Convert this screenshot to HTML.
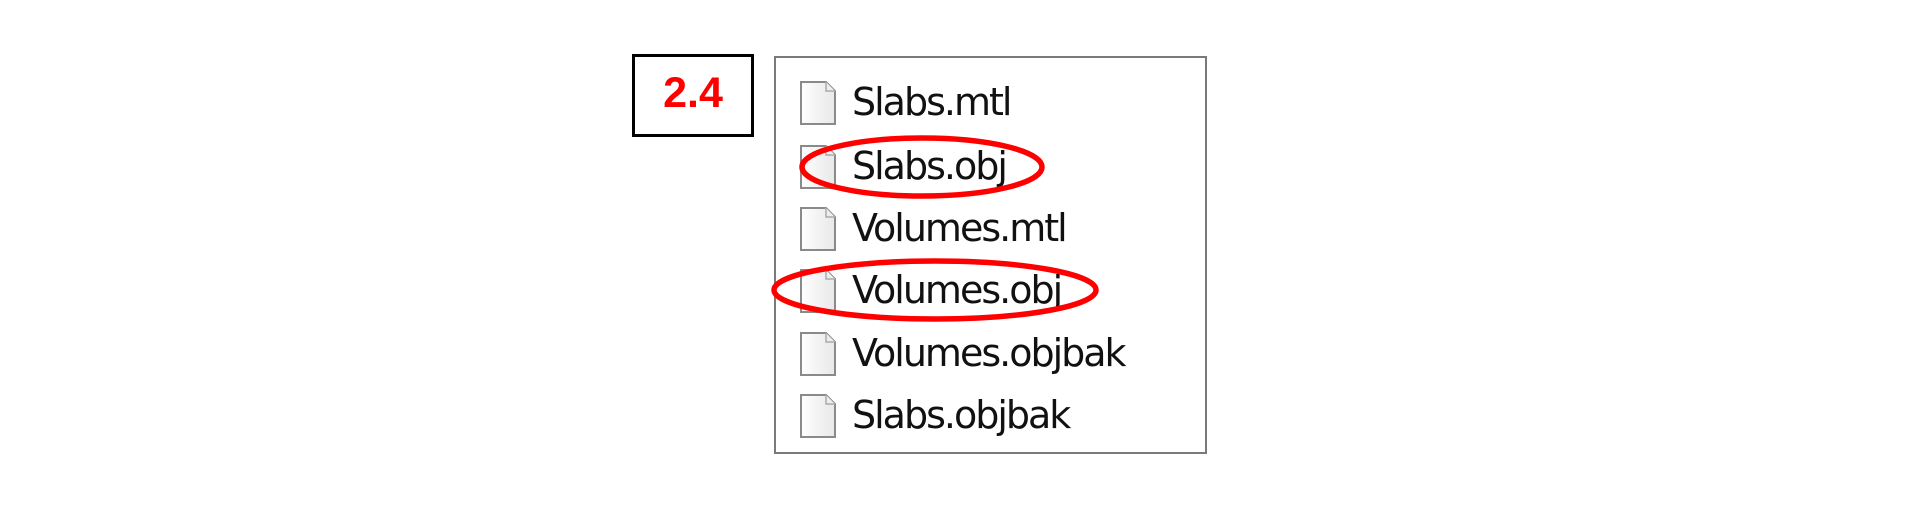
<!DOCTYPE html>
<html><head><style>
body{margin:0;width:1920px;height:510px;background:#fff;position:relative;overflow:hidden;font-family:"DejaVu Sans","Liberation Sans",sans-serif}
.b{position:absolute;left:632px;top:54px;width:116px;height:77px;border:3px solid #000;box-sizing:content-box}
.b span{position:absolute;left:0;right:0;top:12px;text-align:center;color:#f00;font:bold 43px "Liberation Sans",sans-serif}
.p{position:absolute;left:774px;top:56px;width:429px;height:394px;border:2.5px solid #7a7a7a}
.r{position:absolute;left:852px;font-size:38px;color:#111;line-height:44px;letter-spacing:-2px}
</style></head><body>
<div class="b"><span>2.4</span></div>
<div class="p"></div>
<svg width="1920" height="510" style="position:absolute;left:0;top:0">
<defs><linearGradient id="g" x1="0" x2="1"><stop offset="0" stop-color="#fff"/><stop offset="1" stop-color="#e8e8e8"/></linearGradient>
<g id="f"><path d="M1 1H26L35 10V43H1Z" fill="url(#g)" stroke="#8a8a8a" stroke-width="2"/><path d="M26 1V10H35" fill="#eee" stroke="#aaa" stroke-width="1.5"/></g></defs>
<use href="#f" x="800" y="81"/>
<use href="#f" x="800" y="145"/>
<use href="#f" x="800" y="207"/>
<use href="#f" x="800" y="269"/>
<use href="#f" x="800" y="332"/>
<use href="#f" x="800" y="394"/>
</svg>
<div class="r" style="top:80px">Slabs.mtl</div>
<div class="r" style="top:144px">Slabs.obj</div>
<div class="r" style="top:206px">Volumes.mtl</div>
<div class="r" style="top:268px">Volumes.obj</div>
<div class="r" style="top:331px">Volumes.objbak</div>
<div class="r" style="top:393px">Slabs.objbak</div>
<svg width="1920" height="510" style="position:absolute;left:0;top:0">
<ellipse cx="922" cy="167" rx="120" ry="29" fill="none" stroke="#f00" stroke-width="5.5"/>
<ellipse cx="935" cy="290" rx="161" ry="29" fill="none" stroke="#f00" stroke-width="5.5"/>
</svg>
</body></html>
